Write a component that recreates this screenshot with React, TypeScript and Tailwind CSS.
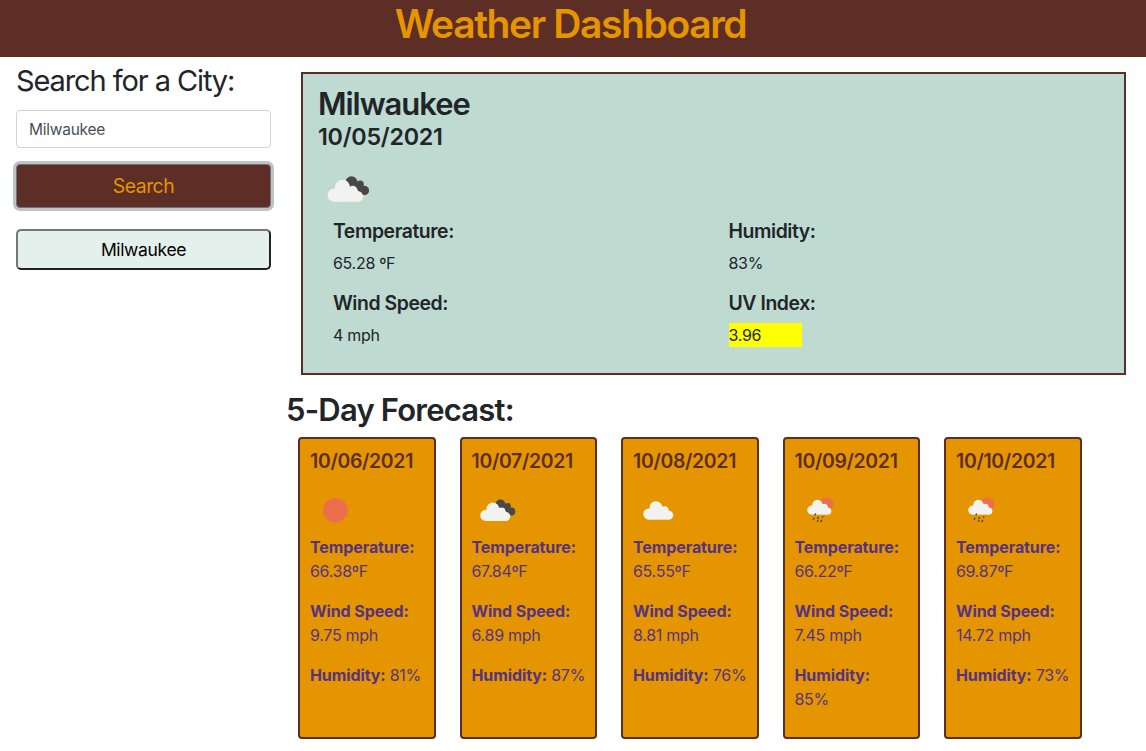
import type { ReactNode } from "react";

type Kind = "sun" | "broken" | "cloud" | "rain";

const days: { date: string; kind: Kind; temp: string; wind: string; humidity: string }[] = [
  { date: "10/06/2021", kind: "sun", temp: "66.38", wind: "9.75", humidity: "81" },
  { date: "10/07/2021", kind: "broken", temp: "67.84", wind: "6.89", humidity: "87" },
  { date: "10/08/2021", kind: "cloud", temp: "65.55", wind: "8.81", humidity: "76" },
  { date: "10/09/2021", kind: "rain", temp: "66.22", wind: "7.45", humidity: "85" },
  { date: "10/10/2021", kind: "rain", temp: "69.87", wind: "14.72", humidity: "73" },
];

function Cloud() {
  return (
    <g fill="#f2f2f0">
      <circle cx="20" cy="46" r="20" />
      <circle cx="45" cy="23" r="23" />
      <circle cx="76" cy="32" r="14" />
      <circle cx="91" cy="50" r="16" />
      <rect x="20" y="30" width="71" height="36" />
    </g>
  );
}

function DarkCloud() {
  return (
    <g fill="#484848">
      <circle cx="72" cy="7" r="18" />
      <circle cx="98" cy="13" r="11" />
      <circle cx="111" cy="32" r="14" />
      <path d="M72 7 L98 13 L111 32 L108 46 L70 25Z" />
    </g>
  );
}

function WeatherIcon({ kind }: { kind: Kind }) {
  return (
    <svg viewBox="0 0 50 50" className="size-[50px]">
      {kind === "sun" && <circle cx="25.3" cy="25.2" r="12.3" fill="#ec6e4c" />}
      {kind === "broken" && (
        <g transform="translate(8.3 17.5) scale(0.28)">
          <DarkCloud />
          <Cloud />
        </g>
      )}
      {kind === "cloud" && (
        <g transform="translate(10.3 16.2) scale(0.28)">
          <Cloud />
        </g>
      )}
      {kind === "rain" && (
        <g>
          <circle cx="31.6" cy="19.2" r="6.8" fill="#ec6e4c" />
          <g transform="translate(12.2 14.7) scale(0.226)">
            <Cloud />
          </g>
          <g stroke="#484848" strokeWidth="1.4" strokeLinecap="round">
            <path d="M20.4 29l-.3 .8M18.9 33.2l-.6 1.2M23.4 32.4l-.6 1.1M27.9 31.7l-.3.4M22.9 35.5l-.4.8M26.6 35.4l-.6 1.2" />
          </g>
        </g>
      )}
    </svg>
  );
}

function Reading({ label, children }: { label: string; children: ReactNode }) {
  return (
    <div className="h-[72px]">
      <h5 className="mb-2 text-[19.4px] leading-6 font-[560] tracking-[-0.43px]">{label}</h5>
      {children}
    </div>
  );
}

export default function App() {
  return (
    <div className="h-[751px] overflow-hidden bg-white font-['Inter',sans-serif] text-base leading-6 tracking-[-0.3px] text-[#212529]">
      <header className="flex h-[57px] justify-center bg-[#5c2e25]">
        <h1 className="mr-[5px] h-12 text-[39px] leading-[48px] font-[570] tracking-[-1.4px] text-[#e59500]">
          Weather Dashboard
        </h1>
      </header>
      <div className="flex">
        <aside className="ml-4 w-[255px] pt-[6px]">
          <h3 className="text-[29px] leading-9 tracking-[-1.1px] whitespace-nowrap">Search for a City:</h3>
          <input
            defaultValue="Milwaukee"
            className="mt-[11px] block h-[38px] w-full rounded border border-[#ced4da] bg-white px-3 text-[15.5px] tracking-[-0.25px] text-[#495057] outline-none"
          />
          <button className="mt-4 block h-11 w-full rounded border border-[#6c757d] bg-[#5c2e25] text-[19.4px] tracking-[-0.5px] text-[#e59500] shadow-[0_0_0_3px_#bec3c7]">
            Search
          </button>
          <button className="mt-[21px] block h-[41px] w-full rounded-[5px] border-2 border-t-[#767676] border-r-[#212121] border-b-[#212121] border-l-[#767676] bg-[#e4f0eb] text-[17.5px] tracking-[-0.35px] text-black">
            Milwaukee
          </button>
        </aside>
        <main className="pt-[15px] pl-4">
          <section className="ml-[14px] h-[303px] w-[825px] border-2 border-[#5c2e25] bg-[#bfdbd1] px-[15px] pt-[11px]">
            <h2 className="text-[31px] leading-[38px] font-[560] tracking-[-1.05px]">Milwaukee</h2>
            <h4 className="text-[23.3px] leading-[28px] font-[560] tracking-[-0.25px]">10/05/2021</h4>
            <svg viewBox="0 0 60 60" className="mt-[7px] size-[60px]">
              <g transform="translate(9.5 21.8) scale(0.333)">
                <DarkCloud />
                <Cloud />
              </g>
            </svg>
            <div className="mt-px -mr-[15px] grid grid-cols-2 pl-[15px]">
              <Reading label="Temperature:">
                <p>65.28 ºF</p>
              </Reading>
              <Reading label="Humidity:">
                <p>83%</p>
              </Reading>
              <Reading label="Wind Speed:">
                <p>4 mph</p>
              </Reading>
              <Reading label="UV Index:">
                <p className="w-[73px] bg-[#ffff00]">3.96</p>
              </Reading>
            </div>
          </section>
          <h2 className="mt-4 -ml-px text-[31px] leading-[38px] font-[560] tracking-[-0.8px]">5-Day Forecast:</h2>
          <div className="mt-2 ml-[11px] flex gap-6">
            {days.map((d) => (
              <article
                key={d.date}
                className="h-[302px] w-[137.5px] rounded border-2 border-[#5c2e25] bg-[#e59500] pt-[10px] pr-[6px] pl-[10px] text-[#563380]"
              >
                <h5 className="text-[19.4px] leading-6 font-[560] tracking-[-0.3px] text-[#5c2e25]">{d.date}</h5>
                <div className="mt-3 h-[50px]">
                  <WeatherIcon kind={d.kind} />
                </div>
                <p className="mb-4">
                  <b className="tracking-[-0.1px]">Temperature:</b>
                  <br />
                  {d.temp}ºF
                </p>
                <p className="mb-4">
                  <b className="tracking-[-0.1px]">Wind Speed:</b>
                  <br />
                  {d.wind} mph
                </p>
                <p>
                  <b className="tracking-[-0.1px]">Humidity:</b>
                  {d.humidity === "85" ? <br /> : " "}
                  {d.humidity}%
                </p>
              </article>
            ))}
          </div>
        </main>
      </div>
    </div>
  );
}
